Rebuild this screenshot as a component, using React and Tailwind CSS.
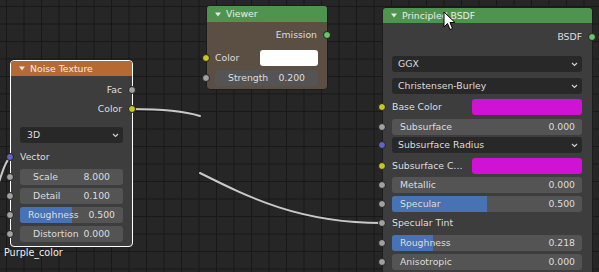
import React from 'react'

const SOCK = {
  gray: 'bg-[#a1a1a1]',
  yellow: 'bg-[#c7c729]',
  blue: 'bg-[#6363c7]',
  green: 'bg-[#63c763]',
}

function Socket({ color = 'gray', side = 'left' }) {
  const pos = side === 'right' ? '-right-[4px]' : '-left-[5px]'
  return <span className={`absolute top-1/2 -translate-y-1/2 w-[8px] h-[8px] rounded-full border border-[#202020] ${SOCK[color]} ${pos}`} />
}

function Tri() {
  return (
    <svg width="6" height="5" viewBox="0 0 6 5" className="shrink-0">
      <path d="M0 0.5 L6 0.5 L3 4.5 Z" fill="#e6e6e6" />
    </svg>
  )
}

function Chevron() {
  return (
    <svg width="7" height="5" viewBox="0 0 7 5" className="shrink-0">
      <path d="M1 1 L3.5 3.5 L6 1" fill="none" stroke="#d0d0d0" strokeWidth="1.2" />
    </svg>
  )
}

function Node({ className, headerBg, title, children }) {
  return (
    <div className={`absolute rounded-[4px] ${className}`}>
      <div className={`flex items-center gap-[5px] pl-[8px] rounded-t-[3px] text-[#ececec] ${headerBg}`}>
        <Tri />
        <span>{title}</span>
      </div>
      {children}
    </div>
  )
}

function Row({ className = '', socket, side = 'left', field = false, children }) {
  return (
    <div className={`relative flex items-center ${field ? 'h-[16px]' : 'h-[18px]'} ${className}`}>
      {socket && <Socket color={socket} side={side} />}
      {children}
    </div>
  )
}

function Field({ label, value, fill, pad = 'px-[8px]' }) {
  return (
    <div className="relative flex-1 h-[16px] rounded-[3px] bg-[#545454] overflow-hidden">
      {fill != null && <div className="absolute inset-y-0 left-0 bg-[#4772b3]" style={{ width: `${fill * 100}%` }} />}
      <div className={`relative flex h-full items-center justify-between ${pad}`}>
        <span>{label}</span>
        <span>{value}</span>
      </div>
    </div>
  )
}

function Dropdown({ label, pad = 'pl-[6px] pr-[4px]' }) {
  return (
    <div className={`flex-1 h-[16px] rounded-[3px] bg-[#282828] flex items-center justify-between ${pad}`}>
      <span>{label}</span>
      <Chevron />
    </div>
  )
}

export default function App() {
  return (
    <div className="relative w-[599px] h-[272px] overflow-hidden bg-[#262626] bg-[linear-gradient(to_right,#181818_1px,transparent_1px),linear-gradient(to_bottom,#181818_1px,transparent_1px)] bg-size-[17.5px_17.5px] bg-position-[6px_6px] font-['DejaVu_Sans',sans-serif] text-[9.3px] leading-none text-[#dddddd]">
      <svg className="absolute inset-0 pointer-events-none" width="599" height="272">
        <g fill="none" stroke="#c9c9c9" strokeWidth="2" strokeLinecap="round">
          <path d="M132 109 C160 109 184 111 200 116" />
          <path d="M200 173 C250 198 300 223 382 223" />
          <path d="M10 157 C5 162 3 170 -1 182" />
        </g>
      </svg>

      <Node className="left-[10px] top-[60px] w-[123px] border border-white bg-[#3d3d3d] pb-[4px]" headerBg="h-[15px] bg-[#b66a33]" title="Noise Texture">
        <Row className="mt-[5px] justify-end pr-[10px]" socket="gray" side="right">Fac</Row>
        <Row className="mt-[1px] justify-end pr-[10px]" socket="yellow" side="right">Color</Row>
        <div className="flex mt-[9px] px-[9px]"><Dropdown label="3D" pad="pl-[7px] pr-[4px]" /></div>
        <Row className="mt-[5px] pl-[9px]" socket="blue">Vector</Row>
        <Row field className="mt-[3px] px-[9px]" socket="gray"><Field label="Scale" value="8.000" pad="px-[13px]" /></Row>
        <Row field className="mt-[3px] px-[9px]" socket="gray"><Field label="Detail" value="0.100" pad="px-[13px]" /></Row>
        <Row field className="mt-[3px] px-[9px]" socket="gray"><Field label="Roughness" value="0.500" fill={0.5} pad="px-[8px]" /></Row>
        <Row field className="mt-[3px] px-[9px]" socket="gray"><Field label="Distortion" value="0.000" pad="px-[13px]" /></Row>
      </Node>

      <div className="absolute left-[4px] top-[248px] text-[9.6px] text-[#f0f0f0]">Purple_color</div>

      <Node className="left-[206px] top-[5px] w-[122px] border border-[#1c1c1c] bg-[#5b4f43] pb-[3px]" headerBg="h-[16px] bg-[#4e944e]" title="Viewer">
        <Row className="mt-[4px] justify-end pr-[10px]" socket="green" side="right">Emission</Row>
        <Row className="mt-[5px] pl-[8px] pr-[9px] justify-between" socket="yellow">
          <span>Color</span>
          <div className="w-[58px] h-[16px] rounded-[3px] bg-white" />
        </Row>
        <Row field className="mt-[3px] pl-[8px] pr-[9px]" socket="gray"><Field label="Strength" value="0.200" pad="px-[13px]" /></Row>
      </Node>

      <Node className="left-[382px] top-[7px] w-[211px] border border-[#1c1c1c] bg-[#3d3d3d] pb-[10px]" headerBg="h-[15px] bg-[#4e944e]" title="Principled BSDF">
        <Row className="mt-[5px] justify-end pr-[10px]" socket="green" side="right">BSDF</Row>
        <div className="flex mt-[10px] pl-[9px] pr-[10px]"><Dropdown label="GGX" /></div>
        <div className="flex mt-[6px] pl-[9px] pr-[10px]"><Dropdown label="Christensen-Burley" /></div>
        <Row className="mt-[4px] pl-[9px] pr-[10px] justify-between" socket="yellow">
          <span>Base Color</span>
          <div className="w-[110px] h-[16px] rounded-[3px] bg-[#cf12d3]" />
        </Row>
        <Row field className="mt-[3px] pl-[9px] pr-[10px]" socket="gray"><Field label="Subsurface" value="0.000" pad="pl-[8px] pr-[7px]" /></Row>
        <Row field className="mt-[2px] pl-[9px] pr-[10px]" socket="blue"><Dropdown label="Subsurface Radius" /></Row>
        <Row className="mt-[4px] pl-[9px] pr-[10px] justify-between" socket="yellow">
          <span>Subsurface C...</span>
          <div className="w-[110px] h-[16px] rounded-[3px] bg-[#cf12d3]" />
        </Row>
        <Row field className="mt-[2px] pl-[9px] pr-[10px]" socket="gray"><Field label="Metallic" value="0.000" pad="pl-[8px] pr-[7px]" /></Row>
        <Row field className="mt-[3px] pl-[9px] pr-[10px]" socket="gray"><Field label="Specular" value="0.500" fill={0.5} pad="pl-[8px] pr-[7px]" /></Row>
        <Row className="mt-[2px] pl-[9px]" socket="gray">Specular Tint</Row>
        <Row field className="mt-[3px] pl-[9px] pr-[10px]" socket="gray"><Field label="Roughness" value="0.218" fill={0.218} pad="pl-[8px] pr-[7px]" /></Row>
        <Row field className="mt-[3px] pl-[9px] pr-[10px]" socket="gray"><Field label="Anisotropic" value="0.000" pad="pl-[8px] pr-[7px]" /></Row>
      </Node>

      <svg className="absolute left-[443px] top-[11px] pointer-events-none" width="13" height="20" viewBox="0 0 13 20">
        <path d="M1 1 L1 16 L4.5 12.5 L7 18.5 L9.5 17.5 L7 11.5 L12 11.5 Z" fill="#ffffff" stroke="#000000" strokeWidth="1" strokeLinejoin="round" />
      </svg>
    </div>
  )
}
